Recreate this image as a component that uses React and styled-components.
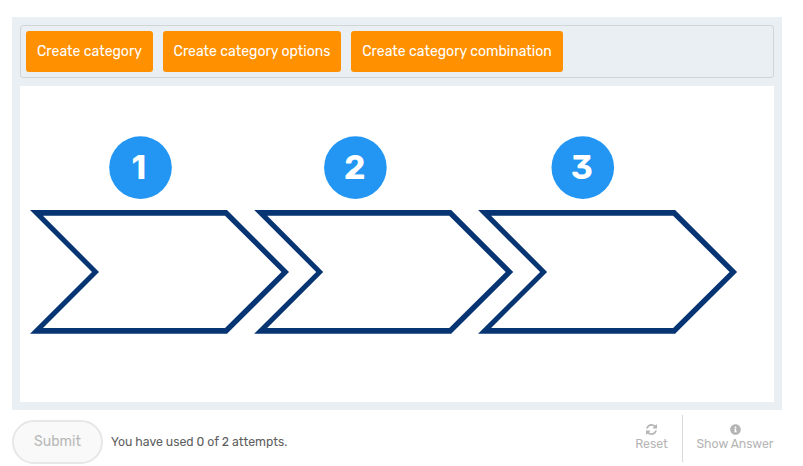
import React from "react";
import styled, { createGlobalStyle } from "styled-components";
import { FaInfoCircle } from "react-icons/fa";

const GlobalStyle = createGlobalStyle`
  * { box-sizing: border-box; }
  body {
    margin: 0;
    background: #fff;
    font-family: Rubik, Roboto, "Liberation Sans", sans-serif;
  }
`;

const Page = styled.main`
  width: 803px;
  height: 466px;
  padding: 17px 16px 0 12px;
  overflow: hidden;
`;

const Problem = styled.section`
  width: 770px;
  height: 393px;
  padding: 8px;
  display: flex;
  flex-direction: column;
  gap: 8px;
  background: #e9eff2;
`;

const ItemBank = styled.div`
  height: 53px;
  padding: 5px;
  display: flex;
  gap: 10px;
  border: 1px solid #d0d5d8;
  border-radius: 3px;
`;

const Item = styled.button`
  width: ${(p) => p.$width}px;
  height: 41px;
  padding: 1px 0 0;
  border: 0;
  border-radius: 3px;
  background: #ff9000;
  color: #fff;
  font: 400 14px/20px Rubik, Roboto, sans-serif;
  white-space: nowrap;
`;

const Target = styled.div`
  flex: 1;
  background: #fff;
`;

const Drawing = styled.svg`
  display: block;
  width: 754px;
  height: 316px;
`;

const StepNumber = styled.text`
  fill: #fff;
  font: ${(p) => (p.$narrow ? "800 33px Inter" : "600 34px Rubik")}, Inter, sans-serif;
  text-anchor: middle;
`;

const Footer = styled.footer`
  display: flex;
  align-items: flex-start;
  height: 56px;
  padding-top: 5px;
`;

const Submit = styled.button`
  width: 91px;
  height: 44px;
  margin-top: 5px;
  padding: 0 0 1px;
  border: 2px solid #e7e7e7;
  border-radius: 22px;
  background: #f9f9f9;
  color: #b8b8b8;
  font: 400 14px/20px Rubik, Roboto, sans-serif;
`;

const Attempts = styled.span`
  margin: 18px auto 0 8px;
  color: #5e5e5e;
  font-size: 12.25px;
  line-height: 18px;
  white-space: nowrap;
`;

const Action = styled.button`
  height: 47px;
  width: ${(p) => p.$width}px;
  padding: 9px 0 0;
  display: flex;
  flex-direction: column;
  align-items: center;
  border: 0;
  border-left: ${(p) => (p.$divided ? "1px solid #d9d9d9" : "0")};
  background: transparent;
  color: #b5b5b5;
  font: 400 12.25px/15px Rubik, Roboto, sans-serif;
  white-space: nowrap;

  svg {
    width: 11px;
    height: 11px;
    margin-bottom: 2px;
  }
`;

const items = [
  { label: "Create category", width: 127 },
  { label: "Create category options", width: 178 },
  { label: "Create category combination", width: 212 },
];

const steps = [
  { n: 1, cx: 120.5, tx: 118.8, x: 10 },
  { n: 2, cx: 335.4, tx: 334.9, x: 234.2 },
  { n: 3, cx: 562.8, tx: 562, x: 458.1 },
];

const arrow =
  "M0 0H197L259 62L197 123.8H0L62 62Z M13 5.7L69 62L13 118H195L251.5 62L195 5.7Z";

function RefreshIcon() {
  return (
    <svg viewBox="0 0 1536 1536" fill="currentColor" aria-hidden="true">
      <path d="M1511 928q0 5-1 7-64 268-268 434.500T764 1536q-146 0-282.500-55T238 1324l-129 129q-19 19-45 19t-45-19-19-45V960q0-26 19-45t45-19h448q26 0 45 19t19 45-19 45l-137 137q71 66 161 102t187 36q134 0 250-65t186-179q11-17 53-117 8-23 30-23h192q13 0 22.500 9.500t9.500 22.500zm25-800v448q0 26-19 45t-45 19h-448q-26 0-45-19t-19-45 19-45l138-138Q969 256 768 256q-134 0-250 65T332 500q-11 17-53 117-8 23-30 23H50q-13 0-22.500-9.500T18 608v-7q65-268 270-434.500T768 0q146 0 284 55.500T1297 212l130-129q19-19 45-19t45 19 19 45z" />
    </svg>
  );
}

export default function App() {
  return (
    <>
      <GlobalStyle />
      <Page>
        <Problem>
          <ItemBank>
            {items.map((item) => (
              <Item key={item.label} $width={item.width}>
                {item.label}
              </Item>
            ))}
          </ItemBank>
          <Target>
            <Drawing viewBox="0 0 754 316" role="img" aria-label="Three step process">
              {steps.map((step) => (
                <g key={step.n}>
                  <circle cx={step.cx} cy="81.6" r="31.3" fill="#2396f3" />
                  <StepNumber x={step.tx} y="92.5" $narrow={step.n === 1}>
                    {step.n}
                  </StepNumber>
                  <path
                    d={arrow}
                    transform={`translate(${step.x} 124)`}
                    fill="#073472"
                    fillRule="evenodd"
                  />
                </g>
              ))}
            </Drawing>
          </Target>
        </Problem>
        <Footer>
          <Submit disabled>Submit</Submit>
          <Attempts>You have used 0 of 2 attempts.</Attempts>
          <Action $width={61}>
            <RefreshIcon />
            Reset
          </Action>
          <Action $width={105} $divided>
            <FaInfoCircle />
            Show Answer
          </Action>
        </Footer>
      </Page>
    </>
  );
}
